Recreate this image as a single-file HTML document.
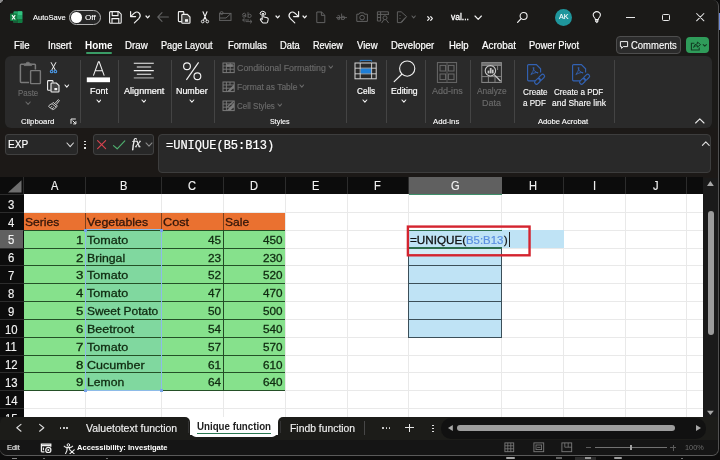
<!DOCTYPE html>
<html lang="en"><head><meta charset="utf-8"><title>Excel - Unique function</title>
<style>
html,body{margin:0;padding:0;background:#0c0c0c;}
body{width:720px;height:460px;overflow:hidden;position:relative;font-family:"Liberation Sans",sans-serif;}
#app{position:absolute;left:0;top:0;width:720px;height:460px;overflow:hidden;will-change:transform;}
#app div,#app svg,#app span{position:absolute;}
#app span{white-space:nowrap;transform-origin:0 50%;display:block;z-index:2;}
</style></head><body><div id="app">
<div style="left:0px;top:0px;width:3px;height:3px;background:#8c8c8c;"></div>
<div style="left:0px;top:0px;width:718.5px;height:456.2px;background:#1b1a18;border-radius:6px 6px 7px 7px;border-right:1px solid #505050;border-bottom:1px solid #5a5a5a;box-sizing:border-box;"></div>
<div style="left:718.5px;top:13px;width:1.5px;height:17px;background:#6f8ad6;"></div>
<div style="left:5px;top:56px;width:706.5px;height:71.5px;background:#2a2a2a;border-radius:6px;"></div>
<div style="left:79.5px;top:60px;width:1px;height:62.5px;background:#444444;"></div>
<div style="left:118px;top:60px;width:1px;height:62.5px;background:#444444;"></div>
<div style="left:170.5px;top:60px;width:1px;height:62.5px;background:#444444;"></div>
<div style="left:214px;top:60px;width:1px;height:62.5px;background:#444444;"></div>
<div style="left:346px;top:60px;width:1px;height:62.5px;background:#444444;"></div>
<div style="left:385.5px;top:60px;width:1px;height:62.5px;background:#444444;"></div>
<div style="left:424.5px;top:60px;width:1px;height:62.5px;background:#444444;"></div>
<div style="left:469.5px;top:60px;width:1px;height:62.5px;background:#444444;"></div>
<div style="left:513.5px;top:60px;width:1px;height:62.5px;background:#444444;"></div>
<div style="left:613.5px;top:60px;width:1px;height:62.5px;background:#444444;"></div>
<div style="left:0px;top:128px;width:718px;height:50px;background:#1c1917;"></div>
<div style="left:5px;top:134px;width:72.5px;height:20.6px;background:#272727;border:1px solid #404040;box-sizing:border-box;border-radius:3px;"></div>
<div style="left:92.5px;top:134px;width:61.5px;height:20.6px;background:#272727;border:1px solid #404040;box-sizing:border-box;border-radius:3px;"></div>
<div style="left:157.5px;top:134.4px;width:553.5px;height:38.2px;background:#292929;border:1px solid #3d3d3d;box-sizing:border-box;border-radius:4px;"></div>
<div style="left:0px;top:177px;width:703.3px;height:17.6px;background:#0c0c0c;"></div>
<div style="left:0px;top:194.2px;width:23.5px;height:222.8px;background:#0c0c0c;"></div>
<div style="left:23.5px;top:194.2px;width:679.8px;height:222.8px;background:#ffffff;"></div>
<div style="left:703.3px;top:177.5px;width:14.7px;height:239.5px;background:#1a1a1a;"></div>
<div style="left:85.0px;top:194.2px;width:1px;height:222.8px;background:#e9e9e9;"></div>
<div style="left:160.8px;top:194.2px;width:1px;height:222.8px;background:#e9e9e9;"></div>
<div style="left:222.8px;top:194.2px;width:1px;height:222.8px;background:#e9e9e9;"></div>
<div style="left:284.5px;top:194.2px;width:1px;height:222.8px;background:#e9e9e9;"></div>
<div style="left:346.5px;top:194.2px;width:1px;height:222.8px;background:#e9e9e9;"></div>
<div style="left:408.0px;top:194.2px;width:1px;height:222.8px;background:#e9e9e9;"></div>
<div style="left:501.3px;top:194.2px;width:1px;height:222.8px;background:#e9e9e9;"></div>
<div style="left:563.0px;top:194.2px;width:1px;height:222.8px;background:#e9e9e9;"></div>
<div style="left:625.0px;top:194.2px;width:1px;height:222.8px;background:#e9e9e9;"></div>
<div style="left:686.0px;top:194.2px;width:1px;height:222.8px;background:#e9e9e9;"></div>
<div style="left:23.5px;top:212.01999999999998px;width:679.8px;height:1px;background:#e9e9e9;"></div>
<div style="left:23.5px;top:229.83999999999997px;width:679.8px;height:1px;background:#e9e9e9;"></div>
<div style="left:23.5px;top:247.66px;width:679.8px;height:1px;background:#e9e9e9;"></div>
<div style="left:23.5px;top:265.48px;width:679.8px;height:1px;background:#e9e9e9;"></div>
<div style="left:23.5px;top:283.29999999999995px;width:679.8px;height:1px;background:#e9e9e9;"></div>
<div style="left:23.5px;top:301.12px;width:679.8px;height:1px;background:#e9e9e9;"></div>
<div style="left:23.5px;top:318.94px;width:679.8px;height:1px;background:#e9e9e9;"></div>
<div style="left:23.5px;top:336.76px;width:679.8px;height:1px;background:#e9e9e9;"></div>
<div style="left:23.5px;top:354.58px;width:679.8px;height:1px;background:#e9e9e9;"></div>
<div style="left:23.5px;top:372.4px;width:679.8px;height:1px;background:#e9e9e9;"></div>
<div style="left:23.5px;top:390.22px;width:679.8px;height:1px;background:#e9e9e9;"></div>
<div style="left:23.5px;top:408.03999999999996px;width:679.8px;height:1px;background:#e9e9e9;"></div>
<div style="left:23.0px;top:177px;width:1px;height:17.4px;background:#2c2c2c;"></div>
<div style="left:85.0px;top:177px;width:1px;height:17.4px;background:#2c2c2c;"></div>
<div style="left:160.8px;top:177px;width:1px;height:17.4px;background:#2c2c2c;"></div>
<div style="left:222.8px;top:177px;width:1px;height:17.4px;background:#2c2c2c;"></div>
<div style="left:284.5px;top:177px;width:1px;height:17.4px;background:#2c2c2c;"></div>
<div style="left:346.5px;top:177px;width:1px;height:17.4px;background:#2c2c2c;"></div>
<div style="left:408.0px;top:177px;width:1px;height:17.4px;background:#2c2c2c;"></div>
<div style="left:501.3px;top:177px;width:1px;height:17.4px;background:#2c2c2c;"></div>
<div style="left:563.0px;top:177px;width:1px;height:17.4px;background:#2c2c2c;"></div>
<div style="left:625.0px;top:177px;width:1px;height:17.4px;background:#2c2c2c;"></div>
<div style="left:686.0px;top:177px;width:1px;height:17.4px;background:#2c2c2c;"></div>
<div style="left:0px;top:194.2px;width:23.5px;height:1px;background:#2c2c2c;"></div>
<div style="left:0px;top:212.01999999999998px;width:23.5px;height:1px;background:#2c2c2c;"></div>
<div style="left:0px;top:229.83999999999997px;width:23.5px;height:1px;background:#2c2c2c;"></div>
<div style="left:0px;top:247.66px;width:23.5px;height:1px;background:#2c2c2c;"></div>
<div style="left:0px;top:265.48px;width:23.5px;height:1px;background:#2c2c2c;"></div>
<div style="left:0px;top:283.29999999999995px;width:23.5px;height:1px;background:#2c2c2c;"></div>
<div style="left:0px;top:301.12px;width:23.5px;height:1px;background:#2c2c2c;"></div>
<div style="left:0px;top:318.94px;width:23.5px;height:1px;background:#2c2c2c;"></div>
<div style="left:0px;top:336.76px;width:23.5px;height:1px;background:#2c2c2c;"></div>
<div style="left:0px;top:354.58px;width:23.5px;height:1px;background:#2c2c2c;"></div>
<div style="left:0px;top:372.4px;width:23.5px;height:1px;background:#2c2c2c;"></div>
<div style="left:0px;top:390.22px;width:23.5px;height:1px;background:#2c2c2c;"></div>
<div style="left:0px;top:408.03999999999996px;width:23.5px;height:1px;background:#2c2c2c;"></div>
<div style="left:408.5px;top:177px;width:93.30000000000001px;height:17.2px;background:#606060;"></div>
<div style="left:408.5px;top:193.7px;width:93.30000000000001px;height:0.9px;background:#3f8f6b;"></div>
<div style="left:0px;top:230.33999999999997px;width:23.2px;height:17.82px;background:#606060;"></div>
<svg style="left:0px;top:177px" width="24" height="18" viewBox="0 0 24 18"><polygon points="8,15.6 21.5,15.6 21.5,3.2" fill="#6e6e6e"/></svg>
<div style="left:23.5px;top:212.51999999999998px;width:261.5px;height:17.82px;background:#ea7130;"></div>
<div style="left:23.5px;top:230.33999999999997px;width:261.5px;height:160.38px;background:#86e18c;"></div>
<div style="left:85.5px;top:230.33999999999997px;width:75.80000000000001px;height:160.38px;background:#80d89f;"></div>
<div style="left:23.5px;top:229.83999999999997px;width:261.5px;height:1px;background:#245027;"></div>
<div style="left:23.5px;top:247.66px;width:261.5px;height:1px;background:#245027;"></div>
<div style="left:23.5px;top:265.48px;width:261.5px;height:1px;background:#245027;"></div>
<div style="left:23.5px;top:283.29999999999995px;width:261.5px;height:1px;background:#245027;"></div>
<div style="left:23.5px;top:301.12px;width:261.5px;height:1px;background:#245027;"></div>
<div style="left:23.5px;top:318.94px;width:261.5px;height:1px;background:#245027;"></div>
<div style="left:23.5px;top:336.76px;width:261.5px;height:1px;background:#245027;"></div>
<div style="left:23.5px;top:354.58px;width:261.5px;height:1px;background:#245027;"></div>
<div style="left:23.5px;top:372.4px;width:261.5px;height:1px;background:#245027;"></div>
<div style="left:23.5px;top:390.22px;width:261.5px;height:1px;background:#245027;"></div>
<div style="left:85.0px;top:212.51999999999998px;width:1px;height:17.82px;background:#7d401c;"></div>
<div style="left:85.0px;top:230.33999999999997px;width:1px;height:160.38px;background:#234a25;"></div>
<div style="left:160.8px;top:212.51999999999998px;width:1px;height:17.82px;background:#7d401c;"></div>
<div style="left:160.8px;top:230.33999999999997px;width:1px;height:160.38px;background:#234a25;"></div>
<div style="left:222.8px;top:212.51999999999998px;width:1px;height:17.82px;background:#7d401c;"></div>
<div style="left:222.8px;top:230.33999999999997px;width:1px;height:160.38px;background:#234a25;"></div>
<div style="left:84.5px;top:229.33999999999997px;width:77.30000000000001px;height:161.88px;border:1.5px solid #8dbbe8;box-sizing:border-box;"></div>
<div style="left:84.2px;top:229.03999999999996px;width:2.6px;height:2.6px;background:#79a4e8;"></div>
<div style="left:160.0px;top:229.03999999999996px;width:2.6px;height:2.6px;background:#79a4e8;"></div>
<div style="left:84.2px;top:389.42px;width:2.6px;height:2.6px;background:#79a4e8;"></div>
<div style="left:160.0px;top:389.42px;width:2.6px;height:2.6px;background:#79a4e8;"></div>
<div style="left:408.5px;top:230.33999999999997px;width:155.0px;height:17.32px;background:#bfe3f5;"></div>
<div style="left:408.5px;top:248.16px;width:93.30000000000001px;height:89.1px;background:#bfe3f5;"></div>
<div style="left:408.0px;top:247.66px;width:94.30000000000001px;height:1px;background:#3b4f59;"></div>
<div style="left:408.0px;top:265.48px;width:94.30000000000001px;height:1px;background:#3b4f59;"></div>
<div style="left:408.0px;top:283.29999999999995px;width:94.30000000000001px;height:1px;background:#3b4f59;"></div>
<div style="left:408.0px;top:301.12px;width:94.30000000000001px;height:1px;background:#3b4f59;"></div>
<div style="left:408.0px;top:318.94px;width:94.30000000000001px;height:1px;background:#3b4f59;"></div>
<div style="left:408.0px;top:336.76px;width:94.30000000000001px;height:1px;background:#3b4f59;"></div>
<div style="left:408.0px;top:248.16px;width:1px;height:89.1px;background:#3b4f59;"></div>
<div style="left:501.3px;top:248.16px;width:1px;height:89.1px;background:#3b4f59;"></div>
<div style="left:408.5px;top:229.64px;width:93.30000000000001px;height:1.1px;background:#2d6e4c;"></div>
<div style="left:408.5px;top:247.46px;width:93.30000000000001px;height:1.1px;background:#2d6e4c;"></div>
<div style="left:409.0px;top:248.56px;width:92.30000000000001px;height:5.2px;background:#d5ebf6;"></div>
<svg style="left:400px;top:220px" width="140" height="44" viewBox="0 0 140 44"><rect x="7.9" y="6.6" width="121.65" height="28.7" fill="none" stroke="#d4242f" stroke-width="2.4"/></svg>
<div style="left:508.6px;top:232px;width:1px;height:15px;background:#222;"></div>
<span style="left:50.81px;top:180.39px;font-size:12.3px;line-height:12.3px;color:#f2f2f2;-webkit-text-stroke:0.15px #f2f2f2;transform:scaleX(0.9000);">A</span>
<span style="left:119.71px;top:180.39px;font-size:12.3px;line-height:12.3px;color:#f2f2f2;-webkit-text-stroke:0.15px #f2f2f2;transform:scaleX(0.9000);">B</span>
<span style="left:188.30px;top:180.39px;font-size:12.3px;line-height:12.3px;color:#f2f2f2;-webkit-text-stroke:0.15px #f2f2f2;transform:scaleX(0.9000);">C</span>
<span style="left:250.15px;top:180.39px;font-size:12.3px;line-height:12.3px;color:#f2f2f2;-webkit-text-stroke:0.15px #f2f2f2;transform:scaleX(0.9000);">D</span>
<span style="left:312.31px;top:180.39px;font-size:12.3px;line-height:12.3px;color:#f2f2f2;-webkit-text-stroke:0.15px #f2f2f2;transform:scaleX(0.9000);">E</span>
<span style="left:374.37px;top:180.39px;font-size:12.3px;line-height:12.3px;color:#f2f2f2;-webkit-text-stroke:0.15px #f2f2f2;transform:scaleX(0.9000);">F</span>
<span style="left:450.84px;top:180.39px;font-size:12.3px;line-height:12.3px;color:#f2f2f2;-webkit-text-stroke:0.15px #f2f2f2;transform:scaleX(0.9000);">G</span>
<span style="left:528.65px;top:180.39px;font-size:12.3px;line-height:12.3px;color:#f2f2f2;-webkit-text-stroke:0.15px #f2f2f2;transform:scaleX(0.9000);">H</span>
<span style="left:592.96px;top:180.39px;font-size:12.3px;line-height:12.3px;color:#f2f2f2;-webkit-text-stroke:0.15px #f2f2f2;transform:scaleX(0.9000);">I</span>
<span style="left:653.23px;top:180.39px;font-size:12.3px;line-height:12.3px;color:#f2f2f2;-webkit-text-stroke:0.15px #f2f2f2;transform:scaleX(0.9000);">J</span>
<span style="left:8.05px;top:198.85px;font-size:12.2px;line-height:12.2px;color:#f2f2f2;-webkit-text-stroke:0.15px #f2f2f2;transform:scaleX(0.9300);">3</span>
<span style="left:8.05px;top:216.67px;font-size:12.2px;line-height:12.2px;color:#f2f2f2;-webkit-text-stroke:0.15px #f2f2f2;transform:scaleX(0.9300);">4</span>
<span style="left:8.05px;top:234.49px;font-size:12.2px;line-height:12.2px;color:#f2f2f2;-webkit-text-stroke:0.15px #f2f2f2;transform:scaleX(0.9300);">5</span>
<span style="left:8.05px;top:252.31px;font-size:12.2px;line-height:12.2px;color:#f2f2f2;-webkit-text-stroke:0.15px #f2f2f2;transform:scaleX(0.9300);">6</span>
<span style="left:8.05px;top:270.13px;font-size:12.2px;line-height:12.2px;color:#f2f2f2;-webkit-text-stroke:0.15px #f2f2f2;transform:scaleX(0.9300);">7</span>
<span style="left:8.05px;top:287.95px;font-size:12.2px;line-height:12.2px;color:#f2f2f2;-webkit-text-stroke:0.15px #f2f2f2;transform:scaleX(0.9300);">8</span>
<span style="left:8.05px;top:305.77px;font-size:12.2px;line-height:12.2px;color:#f2f2f2;-webkit-text-stroke:0.15px #f2f2f2;transform:scaleX(0.9300);">9</span>
<span style="left:4.89px;top:323.59px;font-size:12.2px;line-height:12.2px;color:#f2f2f2;-webkit-text-stroke:0.15px #f2f2f2;transform:scaleX(0.9300);">10</span>
<span style="left:5.31px;top:341.41px;font-size:12.2px;line-height:12.2px;color:#f2f2f2;-webkit-text-stroke:0.15px #f2f2f2;transform:scaleX(0.9300);">11</span>
<span style="left:4.89px;top:359.23px;font-size:12.2px;line-height:12.2px;color:#f2f2f2;-webkit-text-stroke:0.15px #f2f2f2;transform:scaleX(0.9300);">12</span>
<span style="left:4.89px;top:377.05px;font-size:12.2px;line-height:12.2px;color:#f2f2f2;-webkit-text-stroke:0.15px #f2f2f2;transform:scaleX(0.9300);">13</span>
<span style="left:4.89px;top:394.87px;font-size:12.2px;line-height:12.2px;color:#f2f2f2;-webkit-text-stroke:0.15px #f2f2f2;transform:scaleX(0.9300);">14</span>
<div style="left:0px;top:405px;width:23px;height:12px;overflow:hidden;z-index:2"><span style="left:4.89px;top:7.69px;font-size:12.2px;line-height:12.2px;color:#f2f2f2;-webkit-text-stroke:0.15px #f2f2f2;transform:scaleX(0.9300);">15</span></div>
<span style="left:25.12px;top:217.01px;font-size:11.5px;line-height:11.5px;color:#33160a;-webkit-text-stroke:0.3px #33160a;transform:scaleX(1.0534);">Series</span>
<span style="left:86.92px;top:217.01px;font-size:11.5px;line-height:11.5px;color:#33160a;-webkit-text-stroke:0.3px #33160a;transform:scaleX(1.0743);">Vegetables</span>
<span style="left:163.43px;top:217.01px;font-size:11.5px;line-height:11.5px;color:#33160a;-webkit-text-stroke:0.3px #33160a;transform:scaleX(1.1054);">Cost</span>
<span style="left:225.43px;top:217.01px;font-size:11.5px;line-height:11.5px;color:#33160a;-webkit-text-stroke:0.3px #33160a;transform:scaleX(1.0486);">Sale</span>
<span style="left:75.62px;top:234.83px;font-size:11.5px;line-height:11.5px;color:#0f2a10;-webkit-text-stroke:0.3px #0f2a10;transform:scaleX(1.1473);">1</span>
<span style="left:86.92px;top:234.83px;font-size:11.5px;line-height:11.5px;color:#0f2a10;-webkit-text-stroke:0.3px #0f2a10;transform:scaleX(1.0910);">Tomato</span>
<span style="left:208.23px;top:234.83px;font-size:11.5px;line-height:11.5px;color:#0f2a10;-webkit-text-stroke:0.3px #0f2a10;transform:scaleX(1.0276);">45</span>
<span style="left:263.23px;top:234.83px;font-size:11.5px;line-height:11.5px;color:#0f2a10;-webkit-text-stroke:0.3px #0f2a10;transform:scaleX(1.0189);">450</span>
<span style="left:75.62px;top:252.65px;font-size:11.5px;line-height:11.5px;color:#0f2a10;-webkit-text-stroke:0.3px #0f2a10;transform:scaleX(1.1473);">2</span>
<span style="left:86.92px;top:252.65px;font-size:11.5px;line-height:11.5px;color:#0f2a10;-webkit-text-stroke:0.3px #0f2a10;transform:scaleX(1.0653);">Bringal</span>
<span style="left:208.23px;top:252.65px;font-size:11.5px;line-height:11.5px;color:#0f2a10;-webkit-text-stroke:0.3px #0f2a10;transform:scaleX(1.0276);">23</span>
<span style="left:263.23px;top:252.65px;font-size:11.5px;line-height:11.5px;color:#0f2a10;-webkit-text-stroke:0.3px #0f2a10;transform:scaleX(1.0189);">230</span>
<span style="left:75.62px;top:270.47px;font-size:11.5px;line-height:11.5px;color:#0f2a10;-webkit-text-stroke:0.3px #0f2a10;transform:scaleX(1.1473);">3</span>
<span style="left:86.92px;top:270.47px;font-size:11.5px;line-height:11.5px;color:#0f2a10;-webkit-text-stroke:0.3px #0f2a10;transform:scaleX(1.0910);">Tomato</span>
<span style="left:208.23px;top:270.47px;font-size:11.5px;line-height:11.5px;color:#0f2a10;-webkit-text-stroke:0.3px #0f2a10;transform:scaleX(1.0276);">52</span>
<span style="left:263.23px;top:270.47px;font-size:11.5px;line-height:11.5px;color:#0f2a10;-webkit-text-stroke:0.3px #0f2a10;transform:scaleX(1.0189);">520</span>
<span style="left:75.62px;top:288.29px;font-size:11.5px;line-height:11.5px;color:#0f2a10;-webkit-text-stroke:0.3px #0f2a10;transform:scaleX(1.1473);">4</span>
<span style="left:86.92px;top:288.29px;font-size:11.5px;line-height:11.5px;color:#0f2a10;-webkit-text-stroke:0.3px #0f2a10;transform:scaleX(1.0910);">Tomato</span>
<span style="left:208.23px;top:288.29px;font-size:11.5px;line-height:11.5px;color:#0f2a10;-webkit-text-stroke:0.3px #0f2a10;transform:scaleX(1.0276);">47</span>
<span style="left:263.23px;top:288.29px;font-size:11.5px;line-height:11.5px;color:#0f2a10;-webkit-text-stroke:0.3px #0f2a10;transform:scaleX(1.0189);">470</span>
<span style="left:75.62px;top:306.11px;font-size:11.5px;line-height:11.5px;color:#0f2a10;-webkit-text-stroke:0.3px #0f2a10;transform:scaleX(1.1473);">5</span>
<span style="left:86.92px;top:306.11px;font-size:11.5px;line-height:11.5px;color:#0f2a10;-webkit-text-stroke:0.3px #0f2a10;transform:scaleX(1.0401);">Sweet Potato</span>
<span style="left:208.23px;top:306.11px;font-size:11.5px;line-height:11.5px;color:#0f2a10;-webkit-text-stroke:0.3px #0f2a10;transform:scaleX(1.0276);">50</span>
<span style="left:263.23px;top:306.11px;font-size:11.5px;line-height:11.5px;color:#0f2a10;-webkit-text-stroke:0.3px #0f2a10;transform:scaleX(1.0189);">500</span>
<span style="left:75.62px;top:323.93px;font-size:11.5px;line-height:11.5px;color:#0f2a10;-webkit-text-stroke:0.3px #0f2a10;transform:scaleX(1.1473);">6</span>
<span style="left:86.92px;top:323.93px;font-size:11.5px;line-height:11.5px;color:#0f2a10;-webkit-text-stroke:0.3px #0f2a10;transform:scaleX(1.0843);">Beetroot</span>
<span style="left:208.23px;top:323.93px;font-size:11.5px;line-height:11.5px;color:#0f2a10;-webkit-text-stroke:0.3px #0f2a10;transform:scaleX(1.0276);">54</span>
<span style="left:263.23px;top:323.93px;font-size:11.5px;line-height:11.5px;color:#0f2a10;-webkit-text-stroke:0.3px #0f2a10;transform:scaleX(1.0189);">540</span>
<span style="left:75.62px;top:341.75px;font-size:11.5px;line-height:11.5px;color:#0f2a10;-webkit-text-stroke:0.3px #0f2a10;transform:scaleX(1.1473);">7</span>
<span style="left:86.92px;top:341.75px;font-size:11.5px;line-height:11.5px;color:#0f2a10;-webkit-text-stroke:0.3px #0f2a10;transform:scaleX(1.0910);">Tomato</span>
<span style="left:208.23px;top:341.75px;font-size:11.5px;line-height:11.5px;color:#0f2a10;-webkit-text-stroke:0.3px #0f2a10;transform:scaleX(1.0276);">57</span>
<span style="left:263.23px;top:341.75px;font-size:11.5px;line-height:11.5px;color:#0f2a10;-webkit-text-stroke:0.3px #0f2a10;transform:scaleX(1.0189);">570</span>
<span style="left:75.62px;top:359.57px;font-size:11.5px;line-height:11.5px;color:#0f2a10;-webkit-text-stroke:0.3px #0f2a10;transform:scaleX(1.1473);">8</span>
<span style="left:86.92px;top:359.57px;font-size:11.5px;line-height:11.5px;color:#0f2a10;-webkit-text-stroke:0.3px #0f2a10;transform:scaleX(1.0865);">Cucumber</span>
<span style="left:208.23px;top:359.57px;font-size:11.5px;line-height:11.5px;color:#0f2a10;-webkit-text-stroke:0.3px #0f2a10;transform:scaleX(1.0276);">61</span>
<span style="left:263.23px;top:359.57px;font-size:11.5px;line-height:11.5px;color:#0f2a10;-webkit-text-stroke:0.3px #0f2a10;transform:scaleX(1.0189);">610</span>
<span style="left:75.62px;top:377.39px;font-size:11.5px;line-height:11.5px;color:#0f2a10;-webkit-text-stroke:0.3px #0f2a10;transform:scaleX(1.1473);">9</span>
<span style="left:86.92px;top:377.39px;font-size:11.5px;line-height:11.5px;color:#0f2a10;-webkit-text-stroke:0.3px #0f2a10;transform:scaleX(1.0562);">Lemon</span>
<span style="left:208.23px;top:377.39px;font-size:11.5px;line-height:11.5px;color:#0f2a10;-webkit-text-stroke:0.3px #0f2a10;transform:scaleX(1.0276);">64</span>
<span style="left:263.23px;top:377.39px;font-size:11.5px;line-height:11.5px;color:#0f2a10;-webkit-text-stroke:0.3px #0f2a10;transform:scaleX(1.0189);">640</span>
<span style="left:409.93px;top:234.83px;font-size:11.5px;line-height:11.5px;color:#111;-webkit-text-stroke:0.3px #111;transform:scaleX(1.0157);">=UNIQUE(</span>
<span style="left:466.43px;top:234.83px;font-size:11.5px;line-height:11.5px;color:#5a8fe0;-webkit-text-stroke:0.2px #5a8fe0;transform:scaleX(0.9898);">B5:B13</span>
<span style="left:503.93px;top:234.83px;font-size:11.5px;line-height:11.5px;color:#111;-webkit-text-stroke:0.3px #111;transform:scaleX(0.9496);">)</span>
<span style="left:8.28px;top:139.52px;font-size:10.4px;line-height:10.4px;color:#ffffff;-webkit-text-stroke:0.15px #ffffff;transform:scaleX(0.9732);">EXP</span>
<span style="left:165.99px;top:139.54px;font-size:12.2px;line-height:12.2px;color:#ffffff;font-family:'Liberation Mono', monospace;-webkit-text-stroke:0.2px #ffffff;transform:scaleX(0.9854);">=UNIQUE(B5:B13)</span>
<div style="left:0px;top:417px;width:717.5px;height:38.3px;background:#151515;border-radius:0 0 7px 8px;"></div>
<div style="left:180px;top:417px;width:110px;height:20.3px;background:#ffffff;"></div>
<div style="left:0px;top:417px;width:190.3px;height:23.4px;background:#1c1c19;border-radius:6px 5px 0 0;"></div>
<div style="left:278px;top:417px;width:439.5px;height:23.4px;background:#1c1c19;border-radius:5px 0 0 0;"></div>
<div style="left:185px;top:435px;width:98px;height:5.4px;background:#1c1c19;"></div>
<div style="left:191px;top:417px;width:86.4px;height:20px;background:#ffffff;border-radius:0 0 5px 5px;"></div>
<div style="left:197px;top:432.6px;width:74px;height:1.6px;background:#2b7a52;"></div>
<div style="left:188px;top:421px;width:1px;height:12px;background:#333333;"></div>
<div style="left:280px;top:421px;width:1px;height:12px;background:#333333;"></div>
<span style="left:86.24px;top:422.93px;font-size:11.2px;line-height:11.2px;color:#f0f0f0;-webkit-text-stroke:0.15px #f0f0f0;transform:scaleX(0.9352);">Valuetotext function</span>
<span style="left:196.98px;top:422.32px;font-size:10.4px;line-height:10.4px;color:#222;font-weight:700;transform:scaleX(0.9363);">Unique function</span>
<span style="left:289.94px;top:422.93px;font-size:11.2px;line-height:11.2px;color:#f0f0f0;-webkit-text-stroke:0.15px #f0f0f0;transform:scaleX(0.9266);">Findb function</span>
<span style="left:7.11px;top:444.19px;font-size:7.8px;line-height:7.8px;color:#e8e8e8;-webkit-text-stroke:0.15px #e8e8e8;transform:scaleX(0.9511);">Edit</span>
<span style="left:76.61px;top:444.19px;font-size:7.8px;line-height:7.8px;color:#ffffff;font-weight:700;transform:scaleX(0.9722);">Accessibility: Investigate</span>
<span style="left:685.10px;top:444.09px;font-size:8.0px;line-height:8.0px;color:#6c6c6c;transform:scaleX(0.9136);">100%</span>
<span style="left:32.80px;top:14.04px;font-size:7.9px;line-height:7.9px;color:#ffffff;-webkit-text-stroke:0.12px #ffffff;transform:scaleX(0.9524);">AutoSave</span>
<span style="left:85.41px;top:13.74px;font-size:7.9px;line-height:7.9px;color:#ffffff;-webkit-text-stroke:0.12px #ffffff;transform:scaleX(1.0384);">Off</span>
<span style="left:450.56px;top:13.40px;font-size:8.8px;line-height:8.8px;color:#ffffff;-webkit-text-stroke:0.3px #ffffff;transform:scaleX(0.9624);">val...</span>
<span style="left:558.66px;top:14.33px;font-size:6.7px;line-height:6.7px;color:#ffffff;-webkit-text-stroke:0.12px #ffffff;transform:scaleX(1.0614);">AK</span>
<span style="left:13.98px;top:41.47px;font-size:10.3px;line-height:10.3px;color:#ffffff;-webkit-text-stroke:0.22px #ffffff;transform:scaleX(0.9359);">File</span>
<span style="left:47.69px;top:41.47px;font-size:10.3px;line-height:10.3px;color:#ffffff;-webkit-text-stroke:0.22px #ffffff;transform:scaleX(0.9171);">Insert</span>
<span style="left:125.28px;top:41.47px;font-size:10.3px;line-height:10.3px;color:#ffffff;-webkit-text-stroke:0.22px #ffffff;transform:scaleX(0.9459);">Draw</span>
<span style="left:161.49px;top:41.47px;font-size:10.3px;line-height:10.3px;color:#ffffff;-webkit-text-stroke:0.22px #ffffff;transform:scaleX(0.8911);">Page Layout</span>
<span style="left:227.69px;top:41.47px;font-size:10.3px;line-height:10.3px;color:#ffffff;-webkit-text-stroke:0.22px #ffffff;transform:scaleX(0.9047);">Formulas</span>
<span style="left:280.29px;top:41.47px;font-size:10.3px;line-height:10.3px;color:#ffffff;-webkit-text-stroke:0.22px #ffffff;transform:scaleX(0.9065);">Data</span>
<span style="left:313.29px;top:41.47px;font-size:10.3px;line-height:10.3px;color:#ffffff;-webkit-text-stroke:0.22px #ffffff;transform:scaleX(0.8805);">Review</span>
<span style="left:356.99px;top:41.47px;font-size:10.3px;line-height:10.3px;color:#ffffff;-webkit-text-stroke:0.22px #ffffff;transform:scaleX(0.9273);">View</span>
<span style="left:391.29px;top:41.47px;font-size:10.3px;line-height:10.3px;color:#ffffff;-webkit-text-stroke:0.22px #ffffff;transform:scaleX(0.9210);">Developer</span>
<span style="left:448.99px;top:41.47px;font-size:10.3px;line-height:10.3px;color:#ffffff;-webkit-text-stroke:0.22px #ffffff;transform:scaleX(0.9218);">Help</span>
<span style="left:481.99px;top:41.47px;font-size:10.3px;line-height:10.3px;color:#ffffff;-webkit-text-stroke:0.22px #ffffff;transform:scaleX(0.9586);">Acrobat</span>
<span style="left:529.49px;top:41.47px;font-size:10.3px;line-height:10.3px;color:#ffffff;-webkit-text-stroke:0.22px #ffffff;transform:scaleX(0.9104);">Power Pivot</span>
<span style="left:85.28px;top:41.47px;font-size:10.3px;line-height:10.3px;color:#ffffff;font-weight:700;transform:scaleX(0.9623);">Home</span>
<div style="left:85.8px;top:52.1px;width:26.5px;height:1.5px;background:#3a9c66;border-radius:1px;"></div>
<div style="left:616px;top:36px;width:64.5px;height:18px;background:#2b2b2b;border:1px solid #4e4e4e;box-sizing:border-box;border-radius:4px;"></div>
<span style="left:630.68px;top:40.27px;font-size:10.5px;line-height:10.5px;color:#ffffff;-webkit-text-stroke:0.12px #ffffff;transform:scaleX(0.9032);">Comments</span>
<div style="left:686px;top:37px;width:23.2px;height:16.2px;background:#2f9c5a;border-radius:4px;"></div>
<span style="left:18.17px;top:89.10px;font-size:8.6px;line-height:8.6px;color:#6b6b6b;-webkit-text-stroke:0.15px #6b6b6b;transform:scaleX(0.9216);">Paste</span>
<span style="left:20.80px;top:117.64px;font-size:7.9px;line-height:7.9px;color:#ffffff;-webkit-text-stroke:0.12px #ffffff;transform:scaleX(0.9884);">Clipboard</span>
<span style="left:90.05px;top:86.50px;font-size:9.0px;line-height:9.0px;color:#fff;-webkit-text-stroke:0.2px #fff;transform:scaleX(0.9936);">Font</span>
<span style="left:123.85px;top:86.50px;font-size:9.0px;line-height:9.0px;color:#fff;-webkit-text-stroke:0.2px #fff;transform:scaleX(1.0092);">Alignment</span>
<span style="left:176.35px;top:86.50px;font-size:9.0px;line-height:9.0px;color:#fff;-webkit-text-stroke:0.2px #fff;transform:scaleX(0.9870);">Number</span>
<span style="left:237.06px;top:64.25px;font-size:8.9px;line-height:8.9px;color:#6b6b6b;-webkit-text-stroke:0.15px #6b6b6b;transform:scaleX(0.9954);">Conditional Formatting</span>
<span style="left:237.06px;top:83.25px;font-size:8.9px;line-height:8.9px;color:#6b6b6b;-webkit-text-stroke:0.15px #6b6b6b;transform:scaleX(0.9515);">Format as Table</span>
<span style="left:237.06px;top:102.25px;font-size:8.9px;line-height:8.9px;color:#6b6b6b;-webkit-text-stroke:0.15px #6b6b6b;transform:scaleX(0.9035);">Cell Styles</span>
<span style="left:270.11px;top:117.64px;font-size:7.9px;line-height:7.9px;color:#fff;-webkit-text-stroke:0.12px #fff;transform:scaleX(0.9112);">Styles</span>
<span style="left:356.55px;top:86.50px;font-size:9.0px;line-height:9.0px;color:#fff;-webkit-text-stroke:0.2px #fff;transform:scaleX(0.9093);">Cells</span>
<span style="left:391.35px;top:86.50px;font-size:9.0px;line-height:9.0px;color:#fff;-webkit-text-stroke:0.2px #fff;transform:scaleX(0.9662);">Editing</span>
<span style="left:431.55px;top:86.50px;font-size:9.0px;line-height:9.0px;color:#6b6b6b;-webkit-text-stroke:0.15px #6b6b6b;transform:scaleX(1.0060);">Add-ins</span>
<span style="left:433.41px;top:117.64px;font-size:7.9px;line-height:7.9px;color:#fff;-webkit-text-stroke:0.12px #fff;transform:scaleX(0.9822);">Add-ins</span>
<span style="left:476.55px;top:86.50px;font-size:9.0px;line-height:9.0px;color:#6b6b6b;-webkit-text-stroke:0.15px #6b6b6b;transform:scaleX(0.9272);">Analyze</span>
<span style="left:482.05px;top:98.80px;font-size:9.0px;line-height:9.0px;color:#6b6b6b;-webkit-text-stroke:0.15px #6b6b6b;transform:scaleX(0.9939);">Data</span>
<span style="left:522.58px;top:87.60px;font-size:8.5px;line-height:8.5px;color:#fff;-webkit-text-stroke:0.12px #fff;transform:scaleX(0.9622);">Create</span>
<span style="left:522.98px;top:99.05px;font-size:8.5px;line-height:8.5px;color:#fff;-webkit-text-stroke:0.12px #fff;transform:scaleX(0.9484);">a PDF</span>
<span style="left:554.48px;top:87.60px;font-size:8.5px;line-height:8.5px;color:#fff;-webkit-text-stroke:0.12px #fff;transform:scaleX(0.9477);">Create a PDF</span>
<span style="left:552.28px;top:99.05px;font-size:8.5px;line-height:8.5px;color:#fff;-webkit-text-stroke:0.12px #fff;transform:scaleX(0.9946);">and Share link</span>
<span style="left:538.21px;top:117.54px;font-size:7.9px;line-height:7.9px;color:#fff;-webkit-text-stroke:0.12px #fff;transform:scaleX(0.9693);">Adobe Acrobat</span>
<svg style="left:9px;top:10px" width="15" height="15" viewBox="0 0 15 15"><rect x="4.5" y="1.3" width="8.8" height="11.7" rx="1" fill="#21a366"/><rect x="9" y="1.3" width="4.3" height="3.9" fill="#33c481"/><rect x="9" y="5.2" width="4.3" height="3.9" fill="#21a366"/><rect x="9" y="9.1" width="4.3" height="3.9" rx="0.8" fill="#107c41"/><rect x="4.5" y="9.1" width="4.5" height="3.9" fill="#185c37"/><rect x="1" y="3.6" width="7.2" height="7.4" rx="0.9" fill="#107c41"/><path d="M3 5.2 L6.2 9.5 M6.2 5.2 L3 9.5" stroke="#fff" stroke-width="1.15" fill="none"/></svg>
<div style="left:69px;top:9.8px;width:32px;height:15px;background:#262626;border:1px solid #b4b4b4;box-sizing:border-box;border-radius:7.5px;"></div>
<div style="left:71.3px;top:12px;width:10.6px;height:10.6px;background:#ffffff;border-radius:5.3px;"></div>
<svg style="left:108px;top:10px" width="15" height="15" viewBox="0 0 15 15"><path d="M1.6 2.6 Q1.6 1.6 2.6 1.6 H10.6 L13.2 4.2 V12.2 Q13.2 13.2 12.2 13.2 H2.6 Q1.6 13.2 1.6 12.2 Z" fill="none" stroke="#f2f2f2" stroke-width="1.1"/><path d="M4.2 1.8 V5.6 H10 V1.8" fill="none" stroke="#f2f2f2" stroke-width="1.1"/><path d="M4 13 V8.6 H10.8 V13" fill="none" stroke="#f2f2f2" stroke-width="1.1"/></svg>
<svg style="left:129px;top:10px" width="14" height="15" viewBox="0 0 14 15"><path d="M1.6 1.6 V6.6 H6.6" fill="none" stroke="#f2f2f2" stroke-width="1.15" stroke-linecap="round" stroke-linejoin="round"/><path d="M1.9 6.4 L5.2 3.2 Q8.4 0.6 10.6 3.6 Q12.2 6.2 9.8 8.6 L5.4 12.8" fill="none" stroke="#f2f2f2" stroke-width="1.15" stroke-linecap="round"/></svg>
<svg style="left:144.95px;top:14.95px" width="5.3" height="3.9" viewBox="0 0 5.3 3.9"><polyline points="1,1 2.65,2.9 4.3,1" fill="none" stroke="#f2f2f2" stroke-width="1.2" stroke-linecap="round" stroke-linejoin="round"/></svg>
<svg style="left:156px;top:11px" width="14" height="12" viewBox="0 0 14 12"><path d="M12.4 6 H2 M6 1.6 L1.8 6 L6 10.4" fill="none" stroke="#626262" stroke-width="1.1" stroke-linecap="round" stroke-linejoin="round"/></svg>
<svg style="left:177px;top:10px" width="15" height="15" viewBox="0 0 15 15"><path d="M4.6 11.6 H2.2 Q1.4 11.6 1.4 10.8 V2.4 Q1.4 1.6 2.2 1.6 H6 Q6.8 1.6 6.8 2.4 V4" fill="none" stroke="#f2f2f2" stroke-width="1.1"/><path d="M5.6 4.4 H10.4 L13 7 V12.4 Q13 13.2 12.2 13.2 H5.6 Q4.8 13.2 4.8 12.4 V5.2 Q4.8 4.4 5.6 4.4 Z" fill="#9a9a9a" fill-opacity="0.3" stroke="#f2f2f2" stroke-width="1.1"/><rect x="8" y="9.2" width="3" height="2.6" fill="#f2f2f2"/></svg>
<svg style="left:199px;top:10px" width="12" height="15" viewBox="0 0 12 15"><path d="M4 1.8 L7.4 10 M8 1.8 L4.6 10" fill="none" stroke="#f2f2f2" stroke-width="1.05" stroke-linecap="round"/><circle cx="3.7" cy="11.5" r="1.35" fill="none" stroke="#f2f2f2" stroke-width="0.95"/><circle cx="8.3" cy="11.5" r="1.35" fill="none" stroke="#f2f2f2" stroke-width="0.95"/></svg>
<svg style="left:218px;top:10px" width="15" height="13" viewBox="0 0 15 13"><rect x="1.6" y="3.4" width="11.4" height="7" fill="none" stroke="#626262" stroke-width="1"/><path d="M1.6 8 H8 L12.8 3.6" fill="none" stroke="#626262" stroke-width="1"/><circle cx="3.6" cy="3" r="1.5" fill="none" stroke="#626262" stroke-width="0.9"/></svg>
<svg style="left:241px;top:11px" width="13" height="13" viewBox="0 0 13 13"><path d="M1.4 4.4 Q1.6 2 3.4 2.2 Q5 2.4 4.8 4.6 V6 M4.8 4.4 Q2 4 1.8 5.6 Q2.2 6.8 4.8 5.6" fill="none" stroke="#626262" stroke-width="0.9"/><path d="M7 1.2 V6.6 M7 4 Q8.4 2.6 9.8 3.6 Q10.8 5 9.6 6.2 Q8.2 7 7 5.8" fill="none" stroke="#626262" stroke-width="0.9"/><path d="M1.6 9 H8 M3.6 7.2 L1.6 9 L3.6 10.8" fill="none" stroke="#626262" stroke-width="0.9"/><path d="M11 10.6 H4.6 M9 8.8 L11 10.6 L9 12.4" fill="none" stroke="#626262" stroke-width="0.9"/></svg>
<svg style="left:258px;top:10px" width="12" height="15" viewBox="0 0 12 15"><path d="M3.4 5.2 Q1.2 3.8 2.8 2 Q4.8 0.4 6.8 2 Q8.2 3.4 7 5" fill="none" stroke="#f2f2f2" stroke-width="1"/><path d="M4.2 9.4 V4.2 Q4.2 3.2 5 3.2 Q5.8 3.2 5.8 4.2 V7 L9.2 7.8 Q10.4 8.2 10.2 9.4 L9.6 12 Q9.4 13 8.4 13 H5.4 Q4.6 13 4.2 12.2 L2.4 9.6 Q2.2 8.6 3.2 8.8 Z" fill="none" stroke="#f2f2f2" stroke-width="1.05" stroke-linejoin="round"/></svg>
<svg style="left:274.55px;top:14.95px" width="5.3" height="3.9" viewBox="0 0 5.3 3.9"><polyline points="1,1 2.65,2.9 4.3,1" fill="none" stroke="#f2f2f2" stroke-width="1.2" stroke-linecap="round" stroke-linejoin="round"/></svg>
<svg style="left:286px;top:10px" width="15" height="15" viewBox="0 0 15 15"><path d="M12.6 1.6 V6.6 H7.6" fill="none" stroke="#f2f2f2" stroke-width="1.15" stroke-linecap="round" stroke-linejoin="round"/><path d="M12.3 6.4 L9 3.2 Q5.8 0.6 3.6 3.6 Q2 6.2 4.4 8.6 L8.8 12.8" fill="none" stroke="#f2f2f2" stroke-width="1.15" stroke-linecap="round"/></svg>
<svg style="left:302.35px;top:14.95px" width="5.3" height="3.9" viewBox="0 0 5.3 3.9"><polyline points="1,1 2.65,2.9 4.3,1" fill="none" stroke="#f2f2f2" stroke-width="1.2" stroke-linecap="round" stroke-linejoin="round"/></svg>
<svg style="left:315px;top:10px" width="12" height="14" viewBox="0 0 12 14"><path d="M1.8 2 H6.6 L9.8 5.2 V12.6 H1.8 Z M6.4 2 V5.4 H9.8" fill="none" stroke="#626262" stroke-width="1"/></svg>
<svg style="left:335px;top:12px" width="13" height="10" viewBox="0 0 13 10"><path d="M1 5.6 H12" stroke="#626262" stroke-width="0.9"/><path d="M2.4 4 Q3.4 3 4.6 3.8 V7.6 M4.6 5.8 Q2.4 5.6 2.4 7 Q3 8.2 4.6 7" fill="none" stroke="#626262" stroke-width="0.9"/><path d="M6.6 1.6 V7.8 M6.6 5 Q7.8 3.6 9.2 4.4 Q10.2 5.8 9.2 7.2 Q7.8 8.2 6.6 7" fill="none" stroke="#626262" stroke-width="0.9"/></svg>
<svg style="left:355px;top:11px" width="14" height="12" viewBox="0 0 14 12"><path d="M1.8 3.2 H4 L4.8 1.8 H8.8 L9.6 3.2 H12.4 V10.4 H1.8 Z" fill="none" stroke="#626262" stroke-width="1"/><circle cx="7.1" cy="6.6" r="2.3" fill="none" stroke="#626262" stroke-width="1"/></svg>
<svg style="left:376px;top:10px" width="14" height="14" viewBox="0 0 14 14"><path d="M1.4 1.8 H12.4 V5 M1.4 1.8 V11 H4.6 M1.4 4.4 H12.4 M1.4 7.4 H5 M4.6 1.8 V11" fill="none" stroke="#626262" stroke-width="0.95"/><circle cx="9" cy="7.8" r="2" fill="none" stroke="#626262" stroke-width="0.95"/><path d="M5.6 13 L7.6 10 M12.6 13 L10.4 10" fill="none" stroke="#626262" stroke-width="0.95"/></svg>
<svg style="left:396px;top:10px" width="13" height="14" viewBox="0 0 13 14"><path d="M1.4 1.8 H5.2 L10.6 6.6 L5.6 12.6 H1.4 Z" fill="none" stroke="#626262" stroke-width="0.95"/><path d="M4.6 12.4 L9.4 7.4 M4 5 V6 M4 8 V9" fill="none" stroke="#626262" stroke-width="0.9"/></svg>
<svg style="left:411.35px;top:14.95px" width="5.3" height="3.9" viewBox="0 0 5.3 3.9"><polyline points="1,1 2.65,2.9 4.3,1" fill="none" stroke="#626262" stroke-width="1.1" stroke-linecap="round" stroke-linejoin="round"/></svg>
<svg style="left:426px;top:14.5px" width="9" height="7" viewBox="0 0 9 7"><path d="M1.7 1.7 L3.3 3.5 L1.7 5.3 M4.7 1.7 L6.3 3.5 L4.7 5.3" fill="none" stroke="#f2f2f2" stroke-width="1.2" stroke-linecap="round" stroke-linejoin="round"/></svg>
<svg style="left:474.40000000000003px;top:14.900000000000002px" width="8.4" height="5.4" viewBox="0 0 8.4 5.4"><polyline points="1,1 4.2,4.4 7.4,1" fill="none" stroke="#f2f2f2" stroke-width="1.15" stroke-linecap="round" stroke-linejoin="round"/></svg>
<svg style="left:516px;top:11px" width="13" height="13" viewBox="0 0 13 13"><circle cx="7.6" cy="5" r="3.5" fill="none" stroke="#f2f2f2" stroke-width="1.1"/><path d="M5.1 7.6 L1.6 11.4" stroke="#f2f2f2" stroke-width="1.2" stroke-linecap="round"/></svg>
<div style="left:554.8px;top:8.5px;width:17.5px;height:17.5px;background:#1f969c;border-radius:9px;"></div>
<svg style="left:591px;top:10px" width="12" height="15" viewBox="0 0 12 15"><path d="M4.4 9.6 Q4.2 8.2 3 7 Q1.4 4.6 3 2.8 Q5.8 0.4 8.6 2.8 Q10.2 4.6 8.6 7 Q7.4 8.2 7.2 9.6 Z" fill="none" stroke="#f2f2f2" stroke-width="1.05"/><path d="M4.6 11.2 H7 M4.8 9.8 V12 Q5.8 13.4 6.8 12 V9.8" fill="none" stroke="#f2f2f2" stroke-width="1"/></svg>
<div style="left:626px;top:16.6px;width:9px;height:1.2px;background:#e8e8e8;"></div>
<div style="left:661.8px;top:13.6px;width:8.2px;height:7.8px;border:1.2px solid #e8e8e8;box-sizing:border-box;border-radius:1.5px;"></div>
<svg style="left:695px;top:12px" width="11" height="11" viewBox="0 0 11 11"><path d="M1.6 1.5 L8.9 8.8 M8.9 1.5 L1.6 8.8" stroke="#e6e6e6" stroke-width="1.05" stroke-linecap="round"/></svg>
<svg style="left:619px;top:40px" width="10" height="10" viewBox="0 0 10 10"><path d="M1.4 1.6 H8.6 V6.6 H4.2 L2.6 8.4 V6.6 H1.4 Z" fill="none" stroke="#f2f2f2" stroke-width="1" stroke-linejoin="round"/></svg>
<svg style="left:688px;top:39px" width="20" height="13" viewBox="0 0 20 13"><path d="M6.4 4.2 H3.4 V11 H11.2 V8.6" fill="none" stroke="#123d23" stroke-width="1.1"/><path d="M5.6 8.4 Q6 5 9.4 4.8 V3 L12.6 5.6 L9.4 8.2 V6.6 Q7 6.6 5.6 8.4 Z" fill="none" stroke="#123d23" stroke-width="1" stroke-linejoin="round"/><polyline points="15.2,5.6 16.8,7.2 18.4,5.6" fill="none" stroke="#123d23" stroke-width="1.1" stroke-linecap="round" stroke-linejoin="round"/></svg>
<svg style="left:18px;top:60px" width="25" height="26" viewBox="0 0 25 26"><path d="M6.4 4.2 H3.2 Q2.4 4.2 2.4 5 V21.6 Q2.4 22.4 3.2 22.4 H11" fill="none" stroke="#7a7a7a" stroke-width="1.5"/><path d="M13.6 4.2 H16.6 Q17.4 4.2 17.4 5 V9.4" fill="none" stroke="#7a7a7a" stroke-width="1.5"/><path d="M6.2 5.6 V3.8 H7.8 Q8 2.2 9.9 2.2 Q11.8 2.2 12 3.8 H13.6 V5.6 Z" fill="#7a7a7a" stroke="#7a7a7a" stroke-width="0.8"/><rect x="12.6" y="10.6" width="9.8" height="13" rx="0.6" fill="#2a2a2a" stroke="#7a7a7a" stroke-width="1.4"/></svg>
<svg style="left:25.099999999999998px;top:101.05px" width="6.2" height="4.3" viewBox="0 0 6.2 4.3"><polyline points="1,1 3.1,3.3 5.2,1" fill="none" stroke="#6a6a6a" stroke-width="1.1" stroke-linecap="round" stroke-linejoin="round"/></svg>
<svg style="left:48px;top:61px" width="11" height="14" viewBox="0 0 11 14"><path d="M3.2 1.6 L7 8.6 M7.8 1.6 L4 8.6" fill="none" stroke="#f2f2f2" stroke-width="1" stroke-linecap="round"/><circle cx="3.6" cy="10.5" r="1.25" fill="none" stroke="#4a95e0" stroke-width="1.2"/><circle cx="7.4" cy="10.5" r="1.25" fill="none" stroke="#4a95e0" stroke-width="1.2"/></svg>
<svg style="left:46px;top:79px" width="15" height="15" viewBox="0 0 15 15"><path d="M4.6 11.2 H2.4 Q1.6 11.2 1.6 10.4 V2.4 Q1.6 1.6 2.4 1.6 H6.2 Q7 1.6 7 2.4 V3.4" fill="none" stroke="#f2f2f2" stroke-width="1.1"/><path d="M5.8 4 H10.4 L13 6.6 V12.2 Q13 13 12.2 13 H5.8 Q5 13 5 12.2 V4.8 Q5 4 5.8 4 Z" fill="#8a8a8a" fill-opacity="0.28" stroke="#f2f2f2" stroke-width="1.1"/><rect x="8.4" y="9" width="2.8" height="2.2" fill="#f2f2f2"/></svg>
<svg style="left:64.0px;top:84.35000000000001px" width="5.6" height="4.1" viewBox="0 0 5.6 4.1"><polyline points="1,1 2.8,3.1 4.6,1" fill="none" stroke="#f2f2f2" stroke-width="1.1" stroke-linecap="round" stroke-linejoin="round"/></svg>
<svg style="left:47px;top:98px" width="14" height="13" viewBox="0 0 14 13"><path d="M8.2 5.2 L11.4 1.6 L12.4 2.6 L9.4 6.4" fill="none" stroke="#cfcfcf" stroke-width="1"/><path d="M6.2 4.4 L10.4 8 L9.2 9.2 L5 5.6 Z" fill="none" stroke="#cfcfcf" stroke-width="1"/><path d="M5 5.8 Q2 6.4 1.6 8.6 L5.6 11.6 Q8 11.4 9 9.2 M3.4 9.8 L5.2 8 M5 11 L6.8 9.2" fill="none" stroke="#cfcfcf" stroke-width="0.9"/></svg>
<svg style="left:70px;top:118px" width="7" height="7" viewBox="0 0 7 7"><path d="M1 5.8 V1 H5.8" fill="none" stroke="#ececec" stroke-width="1"/><path d="M2.6 2.6 L5.8 5.8 M3.2 5.9 H5.9 V3.2" fill="none" stroke="#ececec" stroke-width="1"/></svg>
<svg style="left:86px;top:60px" width="26" height="24" viewBox="0 0 26 24"><path d="M7.4 15.6 L12.4 1.8 H13.2 L18.2 15.6 M9.2 10.8 H16.4" fill="none" stroke="#f2f2f2" stroke-width="1.05"/><rect x="0.8" y="17.4" width="23.2" height="4.8" fill="#ffffff"/></svg>
<svg style="left:95.5px;top:99.10000000000001px" width="5.8" height="4.2" viewBox="0 0 5.8 4.2"><polyline points="1,1 2.9,3.2 4.8,1" fill="none" stroke="#f2f2f2" stroke-width="1.1" stroke-linecap="round" stroke-linejoin="round"/></svg>
<svg style="left:132px;top:61px" width="24" height="20" viewBox="0 0 24 20"><path d="M1.8 2.2 H21.8 M4.8 5.9 H19.2 M1.8 9.6 H21.8 M4.8 13.3 H19.2" stroke="#f2f2f2" stroke-width="1.05"/><path d="M1.8 16.9 H21.8" stroke="#8c8c8c" stroke-width="1.5"/></svg>
<svg style="left:140.7px;top:99.10000000000001px" width="5.8" height="4.2" viewBox="0 0 5.8 4.2"><polyline points="1,1 2.9,3.2 4.8,1" fill="none" stroke="#f2f2f2" stroke-width="1.1" stroke-linecap="round" stroke-linejoin="round"/></svg>
<svg style="left:182px;top:60px" width="22" height="22" viewBox="0 0 22 22"><circle cx="5" cy="6.2" r="3.4" fill="none" stroke="#f2f2f2" stroke-width="1.15"/><circle cx="15.4" cy="16.2" r="3.4" fill="none" stroke="#f2f2f2" stroke-width="1.15"/><path d="M16.6 2.4 L4.4 19.8" stroke="#f2f2f2" stroke-width="1.15"/></svg>
<svg style="left:188.9px;top:99.10000000000001px" width="5.8" height="4.2" viewBox="0 0 5.8 4.2"><polyline points="1,1 2.9,3.2 4.8,1" fill="none" stroke="#f2f2f2" stroke-width="1.1" stroke-linecap="round" stroke-linejoin="round"/></svg>
<svg style="left:222.4px;top:62px" width="14" height="12" viewBox="0 0 14 12"><rect x="1" y="1" width="11.2" height="9.6" fill="none" stroke="#7a7a7a" stroke-width="1"/><path d="M1 4 H12.2 M1 7.2 H12.2 M4.4 1 V10.6" stroke="#7a7a7a" stroke-width="0.9"/><path d="M8.2 1 V10.6" stroke="#7a7a7a" stroke-width="0.9"/><rect x="4.4" y="2.2" width="6.4" height="2.6" fill="#7a7a7a"/></svg>
<svg style="left:222.4px;top:80.8px" width="14" height="12" viewBox="0 0 14 12"><rect x="1" y="1" width="11.2" height="9.6" fill="none" stroke="#7a7a7a" stroke-width="1"/><path d="M1 4 H12.2 M1 7.2 H12.2 M4.4 1 V10.6" stroke="#7a7a7a" stroke-width="0.9"/><path d="M5 10.4 L12 3.6 V6.6 L8 10.4 Z" fill="#7a7a7a"/><path d="M8 1 V4" stroke="#7a7a7a" stroke-width="0.9"/></svg>
<svg style="left:222.4px;top:99.8px" width="14" height="12" viewBox="0 0 14 12"><rect x="1" y="1" width="11.2" height="9.6" fill="none" stroke="#7a7a7a" stroke-width="1"/><path d="M1 4 H12.2 M1 7.2 H12.2 M4.4 1 V10.6" stroke="#7a7a7a" stroke-width="0.9"/><path d="M4.6 10.4 L12 3 V7 L8.4 10.4 Z" fill="#7a7a7a"/><path d="M5 6.6 L10.6 1.2 H12 V1.6 L6 7.2 Z" fill="#7a7a7a"/></svg>
<svg style="left:328.0px;top:65.05px" width="5.6" height="4.1" viewBox="0 0 5.6 4.1"><polyline points="1,1 2.8,3.1 4.6,1" fill="none" stroke="#6a6a6a" stroke-width="1.1" stroke-linecap="round" stroke-linejoin="round"/></svg>
<svg style="left:299.2px;top:84.05px" width="5.6" height="4.1" viewBox="0 0 5.6 4.1"><polyline points="1,1 2.8,3.1 4.6,1" fill="none" stroke="#6a6a6a" stroke-width="1.1" stroke-linecap="round" stroke-linejoin="round"/></svg>
<svg style="left:277.2px;top:103.05px" width="5.6" height="4.1" viewBox="0 0 5.6 4.1"><polyline points="1,1 2.8,3.1 4.6,1" fill="none" stroke="#6a6a6a" stroke-width="1.1" stroke-linecap="round" stroke-linejoin="round"/></svg>
<svg style="left:353px;top:58px" width="26" height="23" viewBox="0 0 26 23"><path d="M7.2 3.6 V2.4 H18.6 V3.6" fill="none" stroke="#2f8be0" stroke-width="0.9"/><rect x="2" y="5" width="21.2" height="15.8" fill="none" stroke="#d8d8d8" stroke-width="1"/><path d="M2 10.2 H23.2 M2 15.8 H23.2 M7.2 5 V20.8 M18.6 5 V20.8" stroke="#d8d8d8" stroke-width="0.9"/><rect x="7.7" y="10.6" width="10.4" height="4.8" fill="#1f7fd8"/></svg>
<svg style="left:362.1px;top:99.10000000000001px" width="5.8" height="4.2" viewBox="0 0 5.8 4.2"><polyline points="1,1 2.9,3.2 4.8,1" fill="none" stroke="#f2f2f2" stroke-width="1.1" stroke-linecap="round" stroke-linejoin="round"/></svg>
<svg style="left:392px;top:59px" width="26" height="25" viewBox="0 0 26 25"><circle cx="15.2" cy="9.6" r="7.6" fill="none" stroke="#f2f2f2" stroke-width="1.1"/><path d="M9.8 15.2 L2.2 22.6" stroke="#f2f2f2" stroke-width="1.2" stroke-linecap="round"/></svg>
<svg style="left:401.1px;top:99.10000000000001px" width="5.8" height="4.2" viewBox="0 0 5.8 4.2"><polyline points="1,1 2.9,3.2 4.8,1" fill="none" stroke="#f2f2f2" stroke-width="1.1" stroke-linecap="round" stroke-linejoin="round"/></svg>
<svg style="left:436px;top:61px" width="22" height="23" viewBox="0 0 22 23"><rect x="1.4" y="1.6" width="19.2" height="19.8" fill="none" stroke="#6a6a6a" stroke-width="1"/><rect x="4" y="4.4" width="5.6" height="5.6" fill="none" stroke="#6a6a6a" stroke-width="1"/><rect x="12.4" y="4.4" width="5.6" height="5.6" fill="none" stroke="#6a6a6a" stroke-width="1"/><rect x="4" y="13" width="5.6" height="5.6" fill="none" stroke="#6a6a6a" stroke-width="1"/><rect x="12.4" y="13" width="5.6" height="5.6" fill="none" stroke="#6a6a6a" stroke-width="1"/><path d="M11 1.6 V21.4" stroke="#6a6a6a" stroke-width="0.8"/></svg>
<svg style="left:480px;top:61px" width="23" height="23" viewBox="0 0 23 23"><rect x="1.8" y="1.6" width="19.6" height="19.8" fill="none" stroke="#8c8c8c" stroke-width="1"/><path d="M1.8 4.4 H21.4 M1.8 15.6 H21.4 M8.4 15.6 V21.4 M15 15.6 V21.4 M17.6 4.4 V9" stroke="#8c8c8c" stroke-width="0.9"/><rect x="1.8" y="1.6" width="19.6" height="2.8" fill="#8c8c8c" fill-opacity="0.7"/><circle cx="10.4" cy="9.8" r="5.2" fill="#2a2a2a" stroke="#c8c8c8" stroke-width="1.1"/><path d="M14.2 13.6 L20.6 20.2" stroke="#c8c8c8" stroke-width="1.3"/><rect x="7.6" y="9.6" width="1.8" height="2.8" fill="#c8c8c8"/><rect x="9.8" y="7" width="1.8" height="5.4" fill="#c8c8c8"/><rect x="12" y="8.6" width="1.6" height="3.8" fill="#c8c8c8"/></svg>
<svg style="left:526.4px;top:63px" width="21" height="23" viewBox="0 0 21 23"><path d="M9 17.8 H2.6 Q1.6 17.8 1.6 16.8 V2.6 Q1.6 1.6 2.6 1.6 H10.4 L14.6 5.8 V9.6" fill="none" stroke="#3262b4" stroke-width="1.15"/><path d="M5 11.4 Q7.4 8.6 8 4.8 Q7.6 3.6 7 4.8 Q7.2 8 11.8 10.2 Q12.6 9.4 11 9.4 Q8 9.6 4.8 11.6" fill="none" stroke="#3262b4" stroke-width="0.9"/><rect x="-3.4" y="-1.9" width="6.8" height="3.8" rx="1.9" transform="translate(11.6,18.2) rotate(-45)" fill="none" stroke="#3262b4" stroke-width="1.15"/><rect x="-3.4" y="-1.9" width="6.8" height="3.8" rx="1.9" transform="translate(15.6,14.2) rotate(-45)" fill="none" stroke="#3262b4" stroke-width="1.15"/></svg>
<svg style="left:571px;top:63px" width="21" height="23" viewBox="0 0 21 23"><path d="M9 17.8 H2.6 Q1.6 17.8 1.6 16.8 V2.6 Q1.6 1.6 2.6 1.6 H10.4 L14.6 5.8 V9.6" fill="none" stroke="#3262b4" stroke-width="1.15"/><path d="M5 11.4 Q7.4 8.6 8 4.8 Q7.6 3.6 7 4.8 Q7.2 8 11.8 10.2 Q12.6 9.4 11 9.4 Q8 9.6 4.8 11.6" fill="none" stroke="#3262b4" stroke-width="0.9"/><rect x="-3.4" y="-1.9" width="6.8" height="3.8" rx="1.9" transform="translate(11.6,18.2) rotate(-45)" fill="none" stroke="#3262b4" stroke-width="1.15"/><rect x="-3.4" y="-1.9" width="6.8" height="3.8" rx="1.9" transform="translate(15.6,14.2) rotate(-45)" fill="none" stroke="#3262b4" stroke-width="1.15"/></svg>
<svg style="left:694px;top:117px" width="12" height="8" viewBox="0 0 12 8"><polyline points="1.6,6 5.8,1.8 10,6" fill="none" stroke="#e8e8e8" stroke-width="1.1" stroke-linecap="round" stroke-linejoin="round"/></svg>
<svg style="left:66.1px;top:142.2px" width="8.4" height="5.6" viewBox="0 0 8.4 5.6"><polyline points="1,1 4.2,4.6 7.4,1" fill="none" stroke="#d6d6d6" stroke-width="1.1" stroke-linecap="round" stroke-linejoin="round"/></svg>
<div style="left:84.4px;top:140.70000000000002px;width:1.5px;height:1.5px;background:#e0e0e0;"></div>
<div style="left:84.4px;top:143.9px;width:1.5px;height:1.5px;background:#e0e0e0;"></div>
<div style="left:84.4px;top:147.10000000000002px;width:1.5px;height:1.5px;background:#e0e0e0;"></div>
<svg style="left:96px;top:139px" width="11" height="11" viewBox="0 0 11 11"><path d="M1.6 1.6 L9.6 9.6 M9.6 1.6 L1.6 9.6" stroke="#d8434f" stroke-width="1.15" stroke-linecap="round"/></svg>
<svg style="left:112px;top:138.5px" width="15" height="11.5" viewBox="0 0 15 11.5"><path d="M1.5 6.6 L5.2 9.8 L12.8 1.8" fill="none" stroke="#4fb06f" stroke-width="1.15" stroke-linecap="round" stroke-linejoin="round"/></svg>
<span style="left:131.6px;top:136.2px;font-family:'Liberation Serif',serif;font-style:italic;font-size:12.6px;line-height:15px;color:#f4f4f4;letter-spacing:0.2px;-webkit-text-stroke:0.3px #f4f4f4;transform:scaleX(0.92)">fx</span>
<svg style="left:145.0px;top:142.20000000000002px" width="8" height="5.2" viewBox="0 0 8 5.2"><polyline points="1,1 4.0,4.2 7,1" fill="none" stroke="#8a8a8a" stroke-width="1.1" stroke-linecap="round" stroke-linejoin="round"/></svg>
<svg style="left:700.6px;top:139.6px" width="10" height="7" viewBox="0 0 10 7"><polyline points="1.4,5.4 4.8,1.8 8.2,5.4" fill="none" stroke="#e0e0e0" stroke-width="1.1" stroke-linecap="round" stroke-linejoin="round"/></svg>
<svg style="left:706px;top:180px" width="9" height="7" viewBox="0 0 9 7"><polygon points="1,6 4.4,1 7.8,6" fill="#a8a8a8"/></svg>
<svg style="left:706px;top:409.5px" width="9" height="6" viewBox="0 0 9 6"><polygon points="1,0.8 7.8,0.8 4.4,5" fill="#a8a8a8"/></svg>
<div style="left:707.6px;top:211px;width:6px;height:123.6px;background:#9b9b9b;border-radius:3px;"></div>
<div style="left:441px;top:418px;width:265px;height:20.6px;background:#111111;border-radius:10px;"></div>
<svg style="left:447.4px;top:424px" width="7" height="8" viewBox="0 0 7 8"><polygon points="5.8,1 5.8,7 1,4" fill="#a8a8a8"/></svg>
<svg style="left:694.6px;top:424px" width="7" height="8" viewBox="0 0 7 8"><polygon points="1,1 1,7 6,4" fill="#a8a8a8"/></svg>
<div style="left:457px;top:424.8px;width:217.8px;height:5.8px;background:#9d9d9d;border-radius:3px;"></div>
<svg style="left:14.5px;top:423px" width="8" height="10" viewBox="0 0 8 10"><polyline points="6,1.4 1.8,4.8 6,8.2" fill="none" stroke="#dedede" stroke-width="1.1" stroke-linecap="round" stroke-linejoin="round"/></svg>
<svg style="left:38px;top:423px" width="8" height="10" viewBox="0 0 8 10"><polyline points="1.6,1.4 5.8,4.8 1.6,8.2" fill="none" stroke="#dedede" stroke-width="1.1" stroke-linecap="round" stroke-linejoin="round"/></svg>
<div style="left:59.95px;top:427px;width:1.5px;height:1.5px;background:#e6e6e6;border-radius:0.75px;"></div>
<div style="left:63.15px;top:427px;width:1.5px;height:1.5px;background:#e6e6e6;border-radius:0.75px;"></div>
<div style="left:66.35px;top:427px;width:1.5px;height:1.5px;background:#e6e6e6;border-radius:0.75px;"></div>
<div style="left:382.45px;top:427px;width:1.5px;height:1.5px;background:#e6e6e6;border-radius:0.75px;"></div>
<div style="left:385.65px;top:427px;width:1.5px;height:1.5px;background:#e6e6e6;border-radius:0.75px;"></div>
<div style="left:388.85px;top:427px;width:1.5px;height:1.5px;background:#e6e6e6;border-radius:0.75px;"></div>
<div style="left:364.2px;top:421px;width:1px;height:13.6px;background:#474747;"></div>
<div style="left:405.4px;top:427.4px;width:8.4px;height:1.1px;background:#e6e6e6;"></div>
<div style="left:409.05px;top:423.8px;width:1.1px;height:8.4px;background:#e6e6e6;"></div>
<div style="left:432.4px;top:424.75px;width:1.3px;height:1.3px;background:#e0e0e0;"></div>
<div style="left:432.4px;top:427.85px;width:1.3px;height:1.3px;background:#e0e0e0;"></div>
<div style="left:432.4px;top:430.95000000000005px;width:1.3px;height:1.3px;background:#e0e0e0;"></div>
<svg style="left:40px;top:443px" width="13" height="10.5" viewBox="0 0 13 10.5"><path d="M1.4 8.8 V1.2 H10.8 V3.8 M1.4 2.6 H10.8 M1.4 8.8 H4.4" fill="none" stroke="#f0f0f0" stroke-width="1.25"/><path d="M3.4 4.6 V7.2" stroke="#f0f0f0" stroke-width="1.1"/><circle cx="8.3" cy="6.9" r="2.6" fill="none" stroke="#f0f0f0" stroke-width="1.2"/><circle cx="8.3" cy="6.9" r="1" fill="#f0f0f0"/></svg>
<svg style="left:62.6px;top:442.6px" width="13" height="11.5" viewBox="0 0 13 11.5"><circle cx="5.4" cy="2" r="1.3" fill="none" stroke="#f0f0f0" stroke-width="1"/><path d="M1.2 3.2 Q2 4.6 5.4 4.6 Q8.8 4.6 9.6 3.2 M4 4.8 V7.4 L2.6 10.6 M6.6 4.8 V6.2" fill="none" stroke="#f0f0f0" stroke-width="1.1" stroke-linecap="round"/><path d="M6.8 6.8 L11.2 10.8 M11.2 6.8 L6.8 10.8" stroke="#f0f0f0" stroke-width="1.1" stroke-linecap="round"/></svg>
<svg style="left:504px;top:442px" width="11" height="11" viewBox="0 0 11 11"><rect x="0.9" y="0.9" width="8.8" height="8.8" fill="none" stroke="#7c7c7c" stroke-width="0.9"/><path d="M0.9 3.8 H9.7 M0.9 6.8 H9.7 M3.8 0.9 V9.7 M6.8 0.9 V9.7" stroke="#7c7c7c" stroke-width="0.8"/></svg>
<svg style="left:532.6px;top:442px" width="12" height="11" viewBox="0 0 12 11"><rect x="0.9" y="0.9" width="9.8" height="8.8" fill="none" stroke="#7c7c7c" stroke-width="0.9"/><rect x="3" y="3" width="5.6" height="4.6" fill="none" stroke="#7c7c7c" stroke-width="0.8"/><path d="M4.2 5.4 H7.4" stroke="#7c7c7c" stroke-width="0.8"/></svg>
<svg style="left:561.4px;top:442px" width="12" height="11" viewBox="0 0 12 11"><rect x="0.9" y="0.9" width="9.8" height="8.8" fill="none" stroke="#7c7c7c" stroke-width="0.9"/><path d="M3.8 0.9 V5.2 H10.7 M7.2 0.9 V5.2" fill="none" stroke="#7c7c7c" stroke-width="0.8"/></svg>
<div style="left:585.8px;top:447.4px;width:4.8px;height:0.9px;background:#5c5c5c;"></div>
<div style="left:595.4px;top:447.4px;width:71.3px;height:0.9px;background:#727272;"></div>
<div style="left:630.2px;top:444.8px;width:1.5px;height:5.6px;background:#a0a0a0;"></div>
<div style="left:670.4px;top:447.4px;width:5.6px;height:0.9px;background:#5c5c5c;"></div>
<div style="left:672.75px;top:445px;width:0.9px;height:5.6px;background:#5c5c5c;"></div>
<div style="left:506px;top:457.2px;width:9px;height:1.6px;background:#a4a4a4;border-radius:1px;"></div>
<div style="left:556px;top:457.4px;width:6px;height:1.2px;background:#5e5e5e;"></div>
<div style="left:574.5px;top:456.9px;width:21px;height:3.1px;background:#2b2b2b;"></div>
<div style="left:584.5px;top:457.2px;width:6.5px;height:2.2px;background:#949494;"></div>
<div style="left:613.5px;top:457.2px;width:8px;height:1.6px;background:#9c9c9c;border-radius:1px;"></div>
<div style="left:12px;top:457.6px;width:4.6px;height:1.4px;background:#858585;"></div>
<div style="left:42.5px;top:457.6px;width:2px;height:1.2px;background:#707070;"></div>
<div style="left:106px;top:457.6px;width:1.6px;height:1.2px;background:#707070;"></div>
<div style="left:681px;top:458px;width:2px;height:1.2px;background:#707070;"></div>
</div></body></html>
